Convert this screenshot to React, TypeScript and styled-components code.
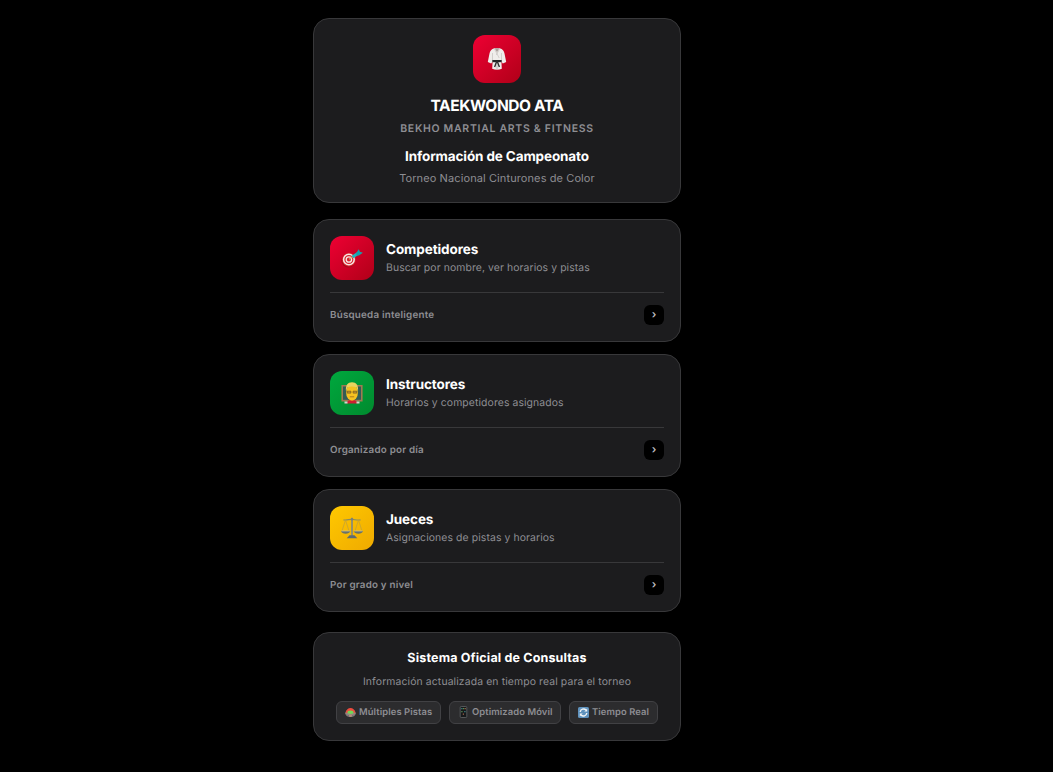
import React from 'react';
import styled, { createGlobalStyle } from 'styled-components';

const GlobalStyle = createGlobalStyle`
  * { box-sizing: border-box; }
  body {
    margin: 0;
    background: #000;
    color: #fff;
    font-family: Inter, "Liberation Sans", sans-serif;
    text-rendering: geometricPrecision;
    -webkit-font-smoothing: antialiased;
  }
  h1, h2, h3, p { margin: 0; }
`;

const Page = styled.main`
  width: 368px;
  margin-left: 313px;
  padding-top: 18px;
  min-height: 772px;
`;

const Panel = styled.section`
  background: #1c1c1e;
  border: 1px solid #38383a;
  border-radius: 16px;
  padding: 16px;
`;

const Header = styled(Panel)`
  height: 185px;
  display: flex;
  flex-direction: column;
  align-items: center;
  text-align: center;
`;

const Tile = styled.div<{ $size: number; $from: string; $to: string }>`
  flex: none;
  width: ${(p) => p.$size}px;
  height: ${(p) => p.$size}px;
  border-radius: 12px;
  background: linear-gradient(135deg, ${(p) => p.$from}, ${(p) => p.$to});
  display: flex;
  align-items: center;
  justify-content: center;
`;

const Brand = styled.h1`
  margin-top: 13px;
  font-size: 15.5px;
  font-weight: 700;
  line-height: 20px;
  letter-spacing: -0.4px;
`;

const Academy = styled.p`
  margin-top: 5px;
  font-size: 10.5px;
  font-weight: 600;
  line-height: 16px;
  letter-spacing: 0.7px;
  text-transform: uppercase;
  color: #8e8e93;
`;

const Heading = styled.h2`
  margin-top: 10px;
  font-size: 13.5px;
  font-weight: 700;
  line-height: 20px;
  letter-spacing: -0.12px;
`;

const Event = styled.p`
  margin-top: 3px;
  font-size: 11px;
  line-height: 16px;
  letter-spacing: 0.1px;
  color: #8e8e93;
`;

const Menu = styled.nav`
  display: flex;
  flex-direction: column;
  gap: 12px;
  margin: 16px 0 20px;
`;

const Card = styled(Panel)`
  height: 123px;
`;

const CardTop = styled.div`
  display: flex;
  gap: 12px;
  padding-bottom: 12px;
  border-bottom: 1px solid #38383a;
`;

const CardText = styled.div`
  padding-top: 5px;
`;

const CardTitle = styled.h3`
  font-size: 13.5px;
  font-weight: 700;
  line-height: 18px;
  letter-spacing: -0.1px;
`;

const CardDescription = styled.p`
  margin-top: 2px;
  font-size: 10.4px;
  line-height: 14px;
  letter-spacing: 0.1px;
  color: #8e8e93;
`;

const CardBottom = styled.div`
  display: flex;
  align-items: flex-start;
  justify-content: space-between;
  padding-top: 12px;
`;

const Note = styled.span`
  font-size: 9.8px;
  font-weight: 600;
  line-height: 22px;
  letter-spacing: 0.22px;
  color: #8e8e93;
`;

const Arrow = styled.span`
  width: 20px;
  height: 20px;
  border-radius: 6px;
  background: #000;
  color: #c0c0c5;
  font-size: 11px;
  font-weight: 600;
  line-height: 18px;
  text-align: center;
`;

const Footer = styled(Panel)`
  height: 109px;
  text-align: center;
`;

const FooterTitle = styled.h3`
  font-size: 12.5px;
  font-weight: 700;
  line-height: 20px;
  letter-spacing: 0.16px;
`;

const FooterText = styled.p`
  margin-top: 5px;
  font-size: 10.4px;
  line-height: 16px;
  letter-spacing: 0.12px;
  color: #8e8e93;
`;

const Chips = styled.div`
  display: flex;
  justify-content: center;
  gap: 8px;
  margin-top: 11px;
`;

const Chip = styled.span<{ $width: number }>`
  width: ${(p) => p.$width}px;
  height: 23px;
  display: flex;
  align-items: center;
  gap: 3px;
  padding: 0 0 0 8px;
  border: 1px solid #414144;
  border-radius: 6px;
  background: #2c2c2e;
  color: #8e8e93;
  font-size: 9.4px;
  font-weight: 600;
  line-height: 20px;
  letter-spacing: 0.1px;
  white-space: nowrap;

  svg { margin-bottom: 1px; }
`;

const Uniform = () => (
  <svg width="20" height="24" viewBox="0 0 20 24">
    <path d="M7.400 1.200C4.300 2 3 3.800 2.500 6.500L.8 15l3.400 1.400 1.400-2-.4 7.400c2.800 1.300 6.800 1.300 9.600 0l-.4-7.400 1.400 2 3.400-1.400-1.700-8.500C17 3.800 15.700 2 12.600 1.200z" fill="#efedeb" />
    <path d="m7.600 1.300 2.400 4 2.400-4z" fill="#aaa09b" />
    <path d="m7.300 1.600 4.900 9.400M12.700 1.600 9.300 8M5.500 6v7.500M14.500 6v7.500" stroke="#c5c1be" strokeWidth=".7" fill="none" />
    <path d="M5.300 13h9.400v2.200H5.300z" fill="#242424" />
    <path d="m9.700 14.500-2.100 5.500M10.300 14.500l2.100 5.500" stroke="#303030" strokeWidth="1.400" />
    <path d="M10 17v5.500" stroke="#a9a4a2" strokeWidth=".7" />
  </svg>
);

const Target = () => (
  <svg width="22" height="20" viewBox="0 0 22 20">
    <circle cx="7.300" cy="12.600" r="7" fill="#a30d19" />
    <circle cx="7.900" cy="11.600" r="6.900" fill="#d91f2c" />
    <circle cx="7.900" cy="11.500" r="5.300" fill="none" stroke="#f5e9e5" strokeWidth="1.500" />
    <circle cx="7.900" cy="11.500" r="2.700" fill="#d71f2d" stroke="#f5e9e5" strokeWidth="1.300" />
    <path d="m8.200 11.300 5-3.700" stroke="#d9a06f" strokeWidth="1.300" />
    <path d="m11.500 9.100 5.700-3.900" stroke="#20b4bd" strokeWidth="3" />
    <path d="m15.200 5.300 2.500-4 1.200 2.400 3 1.100-4 2.700-2.400-.1z" fill="#16a0ac" />
  </svg>
);

const Teacher = () => (
  <svg width="22" height="22" viewBox="0 0 22 22">
    <path d="M.4 3h21.200v16.500H.4z" fill="#a07a51" />
    <path d="M2 4.500h18v13.300H2z" fill="#315c56" />
    <path d="M5.500 21.500c.2-2.500 2-3.500 5.500-3.500s5.300 1 5.500 3.500z" fill="#d01f31" />
    <path d="M3.500 19.500h3v2h-3zm12 0h3v2h-3z" fill="#d9d4ce" />
    <ellipse cx="11" cy="10.500" rx="5.900" ry="8.300" fill="#f5c221" />
    <path d="M5 9.200C4.300 3.500 6.800.3 11 .3s6.700 3.200 6 8.900L15.600 5.500c-3-1.500-6.200-1.500-9.200 0z" fill="#ead35f" />
    <path d="M6.200 9.200h3.700v1.900H6.200zm5.900 0h3.700v1.900h-3.700z" fill="#cf9928" stroke="#6b5422" strokeWidth=".7" />
    <path d="M8.800 14.800h4.400" stroke="#a8741c" strokeWidth=".9" />
  </svg>
);

const Scales = () => (
  <svg width="24" height="22" viewBox="0 0 24 22" fill="none">
    <path d="M3.500 2.800c3 .7 5.500-.5 8.500-.4s5.500 1.100 8.500.4" stroke="#898b62" strokeWidth="1.200" />
    <path d="M12 .8v18" stroke="#858a7c" strokeWidth="1.700" />
    <path d="M5.500 3 2 14M5.500 3 9 14M18.500 3 15 14M18.500 3 22 14" stroke="#bd9f3c" strokeWidth=".7" />
    <path d="M1 14h9.300c-.6 2-2.100 2.700-4.600 2.700S1.600 16 1 14zm12.700 0H23c-.6 2-2.100 2.700-4.600 2.700s-4.100-.7-4.700-2.700z" fill="#697168" />
    <path d="M1.400 14h8.500m4.200 0h8.500" stroke="#c7c19a" strokeWidth=".8" />
    <path d="M9.500 18.200h5l2.800 3H6.700z" fill="#5d6a73" />
    <circle cx="12" cy="2.200" r="1.300" fill="#7c8272" />
  </svg>
);

const Stadium = () => (
  <svg width="11" height="11" viewBox="0 0 11 11">
    <ellipse cx="5.500" cy="6.200" rx="5.200" ry="3.900" fill="#96857f" />
    <path d="M.6 5.800C1.100 2.700 3.300 1 5.500 1s4.400 1.700 4.900 4.800z" fill="#ef4b3e" />
    <ellipse cx="5.500" cy="5.300" rx="3" ry="1.700" fill="#72d65a" />
    <path d="M1.800 7.500v1.600M9.200 7.500v1.600M3.300 8v2M7.700 8v2" stroke="#5f6569" strokeWidth=".8" fill="none" />
    <path d="M4.400 7.800h2.200v2H4.400z" fill="#b98a78" />
  </svg>
);

const Phone = () => (
  <svg width="11" height="12" viewBox="0 0 11 12">
    <rect x="2.200" y=".5" width="6.600" height="11" rx="1" fill="#17191b" stroke="#6c7071" strokeWidth=".7" />
    <path d="M3.300 2h1.200v1.200H3.300zm3 3h1.200v1.200H6.300z" fill="#3f8d8f" />
    <path d="M5 2h1.200v1.200H5zm-1.700 3h1.200v1.200H3.300z" fill="#5b914e" />
    <path d="M6.600 2h1.200v1.200H6.600zM4.800 7.500H6v1.200H4.800z" fill="#a3684c" />
  </svg>
);

const Refresh = () => (
  <svg width="11" height="11" viewBox="0 0 11 11" fill="none">
    <rect width="11" height="11" rx="1.600" fill="#5f92bd" />
    <path d="M2.200 5A3.400 3.400 0 0 1 8 3M8.800 6A3.400 3.400 0 0 1 3 8" stroke="#f2f5f6" strokeWidth="1.400" />
    <path d="M9.200 1.500v3H6.300zM1.800 9.500v-3h2.900z" fill="#f2f5f6" />
  </svg>
);

const sections = [
  { title: 'Competidores', text: 'Buscar por nombre, ver horarios y pistas', note: 'Búsqueda inteligente', from: '#ee0033', to: '#b00018', icon: <Target /> },
  { title: 'Instructores', text: 'Horarios y competidores asignados', note: 'Organizado por día', from: '#00a83e', to: '#008a2e', icon: <Teacher /> },
  { title: 'Jueces', text: 'Asignaciones de pistas y horarios', note: 'Por grado y nivel', from: '#ffc800', to: '#efaa00', icon: <Scales /> },
];

export default function App() {
  return (
    <>
      <GlobalStyle />
      <Page>
        <Header>
          <Tile $size={48} $from="#ee0033" $to="#b00018"><Uniform /></Tile>
          <Brand>TAEKWONDO ATA</Brand>
          <Academy>Bekho Martial Arts &amp; Fitness</Academy>
          <Heading>Información de Campeonato</Heading>
          <Event>Torneo Nacional Cinturones de Color</Event>
        </Header>
        <Menu>
          {sections.map((s) => (
            <Card key={s.title}>
              <CardTop>
                <Tile $size={44} $from={s.from} $to={s.to}>{s.icon}</Tile>
                <CardText>
                  <CardTitle>{s.title}</CardTitle>
                  <CardDescription>{s.text}</CardDescription>
                </CardText>
              </CardTop>
              <CardBottom>
                <Note>{s.note}</Note>
                <Arrow>›</Arrow>
              </CardBottom>
            </Card>
          ))}
        </Menu>
        <Footer>
          <FooterTitle>Sistema Oficial de Consultas</FooterTitle>
          <FooterText>Información actualizada en tiempo real para el torneo</FooterText>
          <Chips>
            <Chip $width={105}><Stadium />Múltiples Pistas</Chip>
            <Chip $width={112}><Phone />Optimizado Móvil</Chip>
            <Chip $width={89}><Refresh />Tiempo Real</Chip>
          </Chips>
        </Footer>
      </Page>
    </>
  );
}
